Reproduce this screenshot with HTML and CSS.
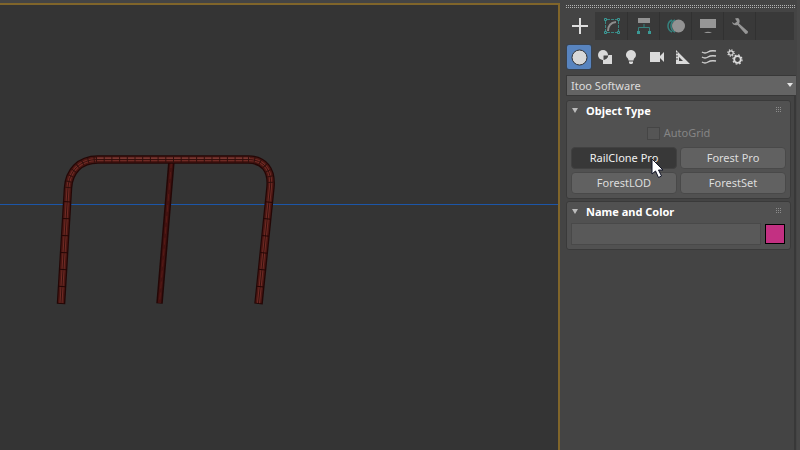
FILE: index.html
```html
<!DOCTYPE html>
<html lang="en">
<head>
<meta charset="utf-8">
<title>Command Panel</title>
<link rel="stylesheet" href="styles.css">
</head>
<body>
<main class="viewport">
  <svg class="scene" width="558" height="445" viewBox="0 5 558 445" role="img" aria-label="Railing model">
    <path d="M0 204.500H558" stroke="#1c56a8" stroke-width="1"/>
    <g fill="none" stroke-linejoin="round">
      <path d="M171.500 161L159.500 303.500" stroke="#240706" stroke-width="6.500"/>
      <path d="M171.500 161L159.500 303" stroke="#431210" stroke-width="3.500"/>
      <path d="M171.500 161L159.500 303" stroke="#581a16" stroke-width="1" stroke-dasharray="7 4"/>
      <path d="M61 304L68 188C69 172 79 159.500 98 159.500H248C264 159.500 272 170 270.500 187L258.500 304" stroke="#240706" stroke-width="8.500"/>
      <path d="M61 303L68 188C69 172 79 159.500 98 159.500H248C264 159.500 272 170 270.500 187L258.500 303" stroke="#4b1713" stroke-width="6"/>
      <path d="M61 303L68 188C69 172 79 159.500 98 159.500H248C264 159.500 272 170 270.500 187L258.500 303" stroke="#702b25" stroke-width="3"/>
      <path d="M61 303L68 188C69 172 79 159.500 98 159.500H248C264 159.500 272 170 270.500 187L258.500 303" stroke="#36100d" stroke-width="1"/>
      <path d="M96 158H250" stroke="#82433d" stroke-width="1"/>
      <path d="M96 159.500H250" stroke="#30100d" stroke-width="6" stroke-dasharray="1 6.700"/>
      <path d="M61 303L68 188" stroke="#240706" stroke-width="7" stroke-dasharray="1 16" stroke-dashoffset="1"/>
      <path d="M258.500 303L270.500 187" stroke="#240706" stroke-width="7" stroke-dasharray="1 16" stroke-dashoffset="1"/>
      <path d="M68 188C69 172 79 159.500 98 159.500M248 159.500C264 159.500 272 170 270.500 187" stroke="#30100d" stroke-width="6" stroke-dasharray="1 5"/>
    </g>
  </svg>
</main>
<aside class="panel">
  <div class="grip"></div>
  <nav class="tabs" aria-label="Panels">
    <button class="tab active" aria-label="Create"><svg width="18" height="18"><path d="M9 1V17M1 9H17" stroke="#dedede" stroke-width="2"/></svg></button>
    <button class="tab" aria-label="Modify"><svg width="18" height="18" fill="none"><path d="M4 2.500H14M4 15.500H14M2.500 4V14M15.500 4V14" stroke="#398783" stroke-dasharray="3 1"/><path d="M1.500 1.500h2v2h-2zM14.500 1.500h2v2h-2zM1.500 14.500h2v2h-2zM14.500 14.500h2v2h-2z" stroke="#3b9a96"/><path d="M5 14Q5 6 13 5" stroke="#8d8d8d" stroke-width="2"/></svg></button>
    <button class="tab" aria-label="Hierarchy"><svg width="18" height="18"><path d="M3 1H15V6H3z" fill="#939393"/><path d="M9 7V11M3.500 15V10.500H14.500V15" fill="none" stroke="#36827e"/><path d="M2 14H5V17H2zM13 14H16V17H13z" fill="#3b9a96"/></svg></button>
    <button class="tab" aria-label="Motion"><svg width="20" height="18"><path d="M6 3A6.500 6.500 0 0 0 6 15M9 3A6.500 6.500 0 0 0 9 15" fill="none" stroke="#36827e" stroke-width="1.500"/><circle cx="12.500" cy="9" r="6.500" fill="#939393"/></svg></button>
    <button class="tab" aria-label="Display"><svg width="18" height="18"><path d="M1 2H17V11H1zM5 16Q9 13.500 13 16z" fill="#969696"/></svg></button>
    <button class="tab" aria-label="Utilities"><svg width="18" height="18"><path d="M4 1.500Q8 0 8.500 3Q9 5 8 6.500L17 14.500Q17 17 14.500 17L6.500 8Q2 9 1 5L3.500 6.500L6 4.500z" fill="#969696"/></svg></button>
  </nav>
  <nav class="kinds" aria-label="Object category">
    <button class="kind active" aria-label="Geometry"><svg width="18" height="18"><circle cx="9.500" cy="9.500" r="7.500" fill="#d8d8d8" stroke="#303236"/></svg></button>
    <button class="kind" aria-label="Shapes"><svg width="18" height="18"><circle cx="7" cy="7" r="5" fill="#dadada"/><path d="M7 7H16V16H7z" fill="#dadada"/><path d="M7.500 7.500H12A5 5 0 0 1 7.500 11.500z" fill="#484848" stroke="#484848"/><path d="M7 12V7H12" fill="none" stroke="#dadada"/></svg></button>
    <button class="kind" aria-label="Lights"><svg width="18" height="18"><path d="M9 2C5 2 3 6 4.500 9C5.500 10 6.500 11 6.500 12.500H11.500C11.500 11 12.500 10 13.500 9C15 6 13 2 9 2zM7 13.500H11V15L10 16H8L7 15z" fill="#dadada"/></svg></button>
    <button class="kind" aria-label="Cameras"><svg width="18" height="18"><path d="M2 4H12V14H2zM12 8L16 4V14L12 10z" fill="#dadada"/></svg></button>
    <button class="kind" aria-label="Helpers"><svg width="18" height="18"><path fill-rule="evenodd" d="M2 2L16 16H2zM5 9V13H9z" fill="#dadada"/><path d="M2 5H4M2 8H4M2 11H4" stroke="#444"/></svg></button>
    <button class="kind" aria-label="Space warps"><svg width="18" height="18"><path d="M2 4Q5 6 8 4T16 3M2 9Q5 11 8 9T16 8M2 14Q5 16 8 14T16 13" fill="none" stroke="#cfcfcf" stroke-width="1.500"/></svg></button>
    <button class="kind" aria-label="Systems"><svg width="18" height="18" fill="none"><circle cx="5" cy="5" r="2.200" stroke="#dadada" stroke-width="1.200"/><circle cx="5" cy="5" r="3.200" stroke="#dadada" stroke-width="1.200" stroke-dasharray="1.200 1.313"/><circle cx="11.500" cy="11.500" r="3.300" stroke="#dadada" stroke-width="1.800"/><circle cx="11.500" cy="11.500" r="4.600" stroke="#dadada" stroke-width="1.200" stroke-dasharray="1.800 1.813"/></svg></button>
  </nav>
  <div class="picker">
    <select aria-label="Category"><option>Itoo Software</option></select>
    <svg class="picker-arrow" width="8" height="6"><path d="M1 1H7L4 5z" fill="#e4e4e4"/></svg>
  </div>
  <div class="rollouts">
    <section class="rollout">
      <h2 class="heading"><svg width="8" height="6"><path d="M1 0H7L4 5z" fill="#bcbcbc"/></svg>Object Type<svg class="dots" width="6" height="6"><path d="M0 .5H6M0 2.500H6M0 4.500H6" stroke="#8c8c8c" stroke-dasharray="1 1"/></svg></h2>
      <label class="autogrid"><input type="checkbox" disabled>AutoGrid</label>
      <div class="types">
        <button class="type pressed">RailClone Pro</button>
        <button class="type">Forest Pro</button>
        <button class="type">ForestLOD</button>
        <button class="type">ForestSet</button>
      </div>
    </section>
    <section class="rollout">
      <h2 class="heading"><svg width="8" height="6"><path d="M1 0H7L4 5z" fill="#bcbcbc"/></svg>Name and Color<svg class="dots" width="6" height="6"><path d="M0 .5H6M0 2.500H6M0 4.500H6" stroke="#8c8c8c" stroke-dasharray="1 1"/></svg></h2>
      <div class="naming">
        <input class="name" type="text" aria-label="Object name">
        <button class="swatch" aria-label="Object color"></button>
      </div>
    </section>
  </div>
</aside>
<svg class="cursor" width="14" height="21" aria-hidden="true"><path d="M1 1V16L4.500 13L7.500 19.500L10.500 18L7.500 12H12z" fill="#fff" stroke="#111428"/></svg>
</body>
</html>
```
FILE: styles.css
```css
* { box-sizing: border-box; }
body {
  margin: 0;
  min-height: 100vh;
  display: flex;
  background: #444;
  color: #dcdcdc;
  font: 11px/16px "Noto Sans", sans-serif;
  overflow: hidden;
}
button, input, select { font: inherit; color: inherit; margin: 0; }
button { padding: 0; border: 0; background: none; }
svg { display: block; flex: none; }

.viewport {
  flex: 1;
  min-width: 0;
  margin-top: 3px;
  border: solid #80652a;
  border-width: 2px 2px 0 0;
  background: #343434;
  overflow: hidden;
}

.panel {
  width: 240px;
  padding: 5px 1px 0 5px;
  border-right: 3px solid #484848;
  display: flex;
  flex-direction: column;
}
.grip {
  height: 3px;
  margin-left: 1px;
  background: repeating-linear-gradient(90deg, #b4b4b4 0 1px, transparent 1px 2px);
  position: relative;
}
.grip::after { content: ""; position: absolute; inset: 1px 0; background: #444; }

.tabs { display: flex; height: 28px; margin: 4px 2px 0 0; background: #393939; }
.tab {
  width: 32px;
  display: grid;
  place-items: center;
  border-right: 1px solid #313131;
}
.tab.active { width: 30px; margin-right: 1px; background: #444; border: 0; }

.kinds { display: flex; gap: 2px; padding: 5px 2px; height: 35px; }
.kind { width: 24px; height: 24px; display: grid; place-items: center; border-radius: 2px; }
.kind.active { background: #5884bf; box-shadow: 0 0 0 1px #38424f; }

.picker { position: relative; margin: 0 0 0 1px; }
.picker select {
  width: 100%;
  height: 21px;
  display: block;
  padding: 0 4px;
  appearance: none;
  border: solid #383838;
  border-width: 1px 0 1px 1px;
  border-radius: 0;
  background: #646464;
}
.picker-arrow { position: absolute; right: 2px; top: 7px; }

.rollouts {
  flex: 1;
  display: flex;
  flex-direction: column;
  gap: 2px;
  margin-left: 1px;
  padding: 4px 3px 0 0;
  border-right: 2px solid #383838;
}
.rollout {
  padding: 2px 4px 4px;
  border: 1px solid #3a3a3a;
  border-radius: 3px;
  background: #515151;
}
.heading {
  display: flex;
  align-items: center;
  height: 16px;
  margin: 0;
  font: bold 11px/16px "Noto Sans", sans-serif;
  color: #fff;
}
.heading svg { margin-right: 7px; }
.heading .dots { margin: 0 4px 3px auto; }
.autogrid {
  display: flex;
  align-items: center;
  justify-content: center;
  gap: 4px;
  height: 28px;
  color: #858585;
}
.autogrid input {
  width: 13px;
  height: 13px;
  appearance: none;
  border: 1px solid #454545;
  background: #555;
}
.types { display: grid; grid-template-columns: 1fr 1fr; gap: 3px; }
.type {
  height: 22px;
  border: 1px solid #494949;
  border-radius: 4px;
  background: #616161;
}
.type.pressed { background: #383838; border-color: #414141; color: #f0f0f0; }
.naming { display: flex; gap: 4px; align-items: center; padding: 3px 1px 0 0; }
.name {
  flex: 1;
  min-width: 0;
  height: 22px;
  border: 1px solid #494949;
  background: #595959;
}
.swatch { width: 20px; height: 20px; border: 1px solid #000; background: #c33082; }

.cursor { position: absolute; left: 651px; top: 158px; }
```
